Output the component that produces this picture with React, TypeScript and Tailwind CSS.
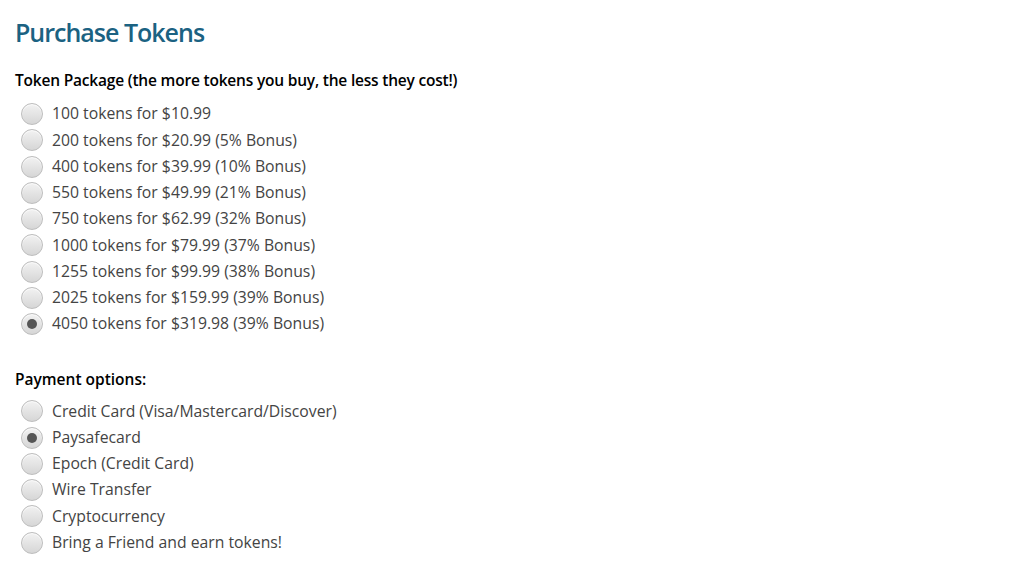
import React from "react";

const tokens = [
  "100 tokens for $10.99",
  "200 tokens for $20.99 (5% Bonus)",
  "400 tokens for $39.99 (10% Bonus)",
  "550 tokens for $49.99 (21% Bonus)",
  "750 tokens for $62.99 (32% Bonus)",
  "1000 tokens for $79.99 (37% Bonus)",
  "1255 tokens for $99.99 (38% Bonus)",
  "2025 tokens for $159.99 (39% Bonus)",
  "4050 tokens for $319.98 (39% Bonus)",
];

const payments = [
  "Credit Card (Visa/Mastercard/Discover)",
  "Paysafecard",
  "Epoch (Credit Card)",
  "Wire Transfer",
  "Cryptocurrency",
  "Bring a Friend and earn tokens!",
];

function Radio({ checked }: { checked?: boolean }) {
  return (
    <span className="w-[22px] h-[22px] rounded-full border border-[#bdbdbd] bg-gradient-to-b from-[#f2f2f2] to-[#d6d6d6] flex items-center justify-center shrink-0 shadow-[inset_0_1px_1px_rgba(255,255,255,0.8)]">
      {checked && <span className="w-[10px] h-[10px] rounded-full bg-[#555]" />}
    </span>
  );
}

function Row({ label, checked }: { label: string; checked?: boolean }) {
  return (
    <div className="flex items-center h-[26.25px] pl-[21px] gap-[9px]">
      <Radio checked={checked} />
      <span className="text-[15.75px] text-[#444] leading-none">{label}</span>
    </div>
  );
}

export default function App() {
  return (
    <div
      className="w-[1025px] h-[576px] bg-white px-[15px] pt-[17px]"
      style={{ fontFamily: '"Open Sans", "Noto Sans", sans-serif' }}
    >
      <h1 className="text-[25px] leading-[30px] text-[#1b6282] font-semibold tracking-[-1px]">
        Purchase Tokens
      </h1>
      <div className="mt-[23px] text-[15.5px] leading-[20px] font-semibold text-black tracking-[-0.2px]">
        Token Package (the more tokens you buy, the less they cost!)
      </div>
      <div className="mt-[11px] ml-[-15px]">
        {tokens.map((t, i) => (
          <Row key={t} label={t} checked={i === tokens.length - 1} />
        ))}
      </div>
      <div className="mt-[32px] text-[15.5px] leading-[20px] font-semibold text-black">
        Payment options:
      </div>
      <div className="mt-[9px] ml-[-15px]">
        {payments.map((p, i) => (
          <Row key={p} label={p} checked={i === 1} />
        ))}
      </div>
    </div>
  );
}
